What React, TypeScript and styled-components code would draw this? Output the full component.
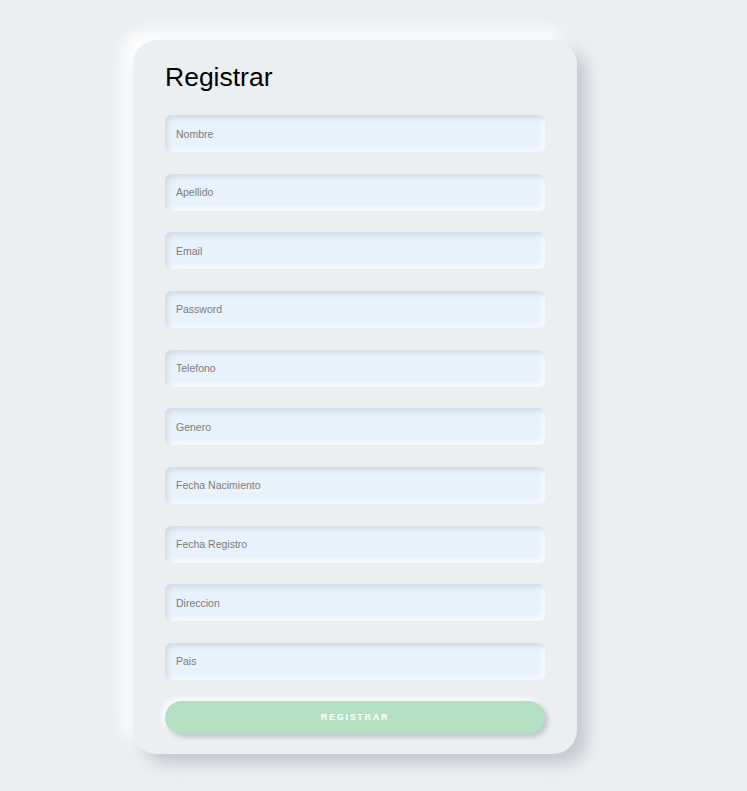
import React from 'react';
import styled, { createGlobalStyle } from 'styled-components';

const GlobalStyle = createGlobalStyle`
  html, body {
    margin: 0;
    padding: 0;
    background: #eceff2;
    font-family: 'Liberation Sans', Arial, sans-serif;
  }
`;

const Page = styled.main`
  min-height: 791px;
  padding: 40px 0 0 133px;
  box-sizing: border-box;
`;

const Card = styled.form`
  width: 444px;
  box-sizing: border-box;
  padding: 20px 32px 20px;
  display: flex;
  flex-direction: column;

  background: #eceff2;
  border-radius: 24px;
  box-shadow:
    10px 10px 16px rgba(163, 170, 180, 0.55),
    -10px -10px 16px rgba(255, 255, 255, 0.9);
`;

const Title = styled.h1`
  margin: 0 0 21px;
  font-size: 26.5px;
  font-weight: 400;
  line-height: 34px;
  color: #000;
`;

const Fields = styled.div`
  display: flex;
  flex-direction: column;
  gap: 21.67px;
`;

const Field = styled.input`
  height: 37px;
  box-sizing: border-box;
  padding: 0 11px;
  border: none;
  border-radius: 6px;
  outline: none;

  background: #e8f2fc;
  box-shadow:
    inset 3px 3px 5px rgba(185, 195, 208, 0.5),
    inset -3px -3px 5px rgba(255, 255, 255, 0.8);

  font-family: inherit;
  font-size: 10.5px;
  color: #333;

  &::placeholder {
    color: #7d7a78;
  }
`;

const Submit = styled.button`
  margin-top: 21px;
  height: 33px;
  border: none;
  border-radius: 17px;
  background: #b3e0c3;
  color: #fff;
  cursor: pointer;

  font-family: inherit;
  font-size: 9px;
  font-weight: 700;
  letter-spacing: 1.7px;
  text-transform: uppercase;

  box-shadow:
    3px 3px 5px rgba(150, 160, 170, 0.55),
    -3px -3px 5px rgba(255, 255, 255, 0.85);
`;

const fields = [
  { name: 'nombre', label: 'Nombre', type: 'text' },
  { name: 'apellido', label: 'Apellido', type: 'text' },
  { name: 'email', label: 'Email', type: 'email' },
  { name: 'password', label: 'Password', type: 'password' },
  { name: 'telefono', label: 'Telefono', type: 'text' },
  { name: 'genero', label: 'Genero', type: 'text' },
  { name: 'fechaNacimiento', label: 'Fecha Nacimiento', type: 'text' },
  { name: 'fechaRegistro', label: 'Fecha Registro', type: 'text' },
  { name: 'direccion', label: 'Direccion', type: 'text' },
  { name: 'pais', label: 'Pais', type: 'text' },
];

export default function App() {
  return (
    <>
      <GlobalStyle />
      <Page>
        <Card onSubmit={(e) => e.preventDefault()}>
          <Title>Registrar</Title>
          <Fields>
            {fields.map((f) => (
              <Field key={f.name} name={f.name} type={f.type} placeholder={f.label} />
            ))}
          </Fields>
          <Submit type='submit'>Registrar</Submit>
        </Card>
      </Page>
    </>
  );
}
